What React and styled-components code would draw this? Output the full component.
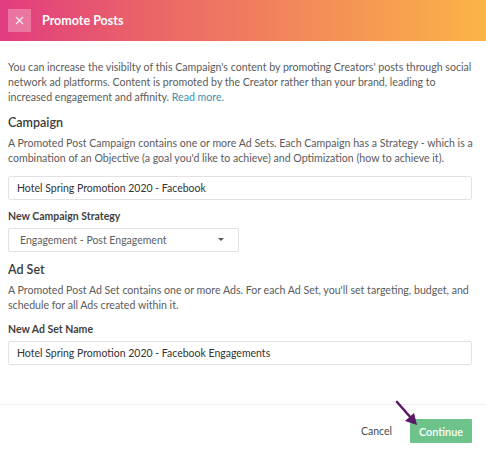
import React from 'react'
import styled, { createGlobalStyle } from 'styled-components'

const GlobalStyle = createGlobalStyle`
  html, body {
    margin: 0;
    padding: 0;
    background: #fff;
    font-family: "Lato", "Open Sans", sans-serif;
  }
`

const Modal = styled.div`
  width: 486px;
  height: 450px;
  display: flex;
  flex-direction: column;
  position: relative;
  overflow: hidden;
`

const Header = styled.div`
  height: 41px;
  display: flex;
  align-items: center;
  padding: 0 8px;
  gap: 11px;
  background: linear-gradient(90deg, #e13c80 0%, #ea6468 30%, #f2875a 60%, #fbb446 100%);
`

const CloseButton = styled.button`
  width: 23px;
  height: 23px;
  border: none;
  padding: 0;
  background: rgba(255, 255, 255, 0.28);
  display: flex;
  align-items: center;
  justify-content: center;
  cursor: pointer;
`

const Title = styled.h1`
  margin: 0;
  font-size: 12.5px;
  font-weight: 700;
  color: #fff;
`

const Body = styled.div`
  flex: 1;
  padding: 19px 14px 0 8px;
`

const Text = styled.p`
  margin: 0 0 ${p => p.$mb || 0}px;
  font-size: 10.6px;
  line-height: 14.8px;
  color: #5b5b5b;
  white-space: nowrap;
`

const Link = styled.a`
  color: #3d8fb0;
  text-decoration: none;
`

const Heading = styled.h2`
  margin: 0 0 6px;
  font-size: 12.5px;
  font-weight: 600;
  color: #3a3a3a;
`

const Label = styled.div`
  font-size: 10.5px;
  font-weight: 700;
  color: #3f3f3f;
  margin-bottom: 6px;
`

const Input = styled.div`
  box-sizing: border-box;
  width: ${p => p.$width || '464px'};
  height: 24px;
  border: 1px solid #e2e2e2;
  border-radius: 2px;
  display: flex;
  align-items: center;
  padding: 0 ${p => p.$pad || 8}px;
  font-size: 10.5px;
  color: ${p => p.$muted ? '#5e5e5e' : '#333'};
  margin-bottom: ${p => p.$mb || 0}px;
  justify-content: space-between;
`

const Caret = styled.span`
  width: 0;
  height: 0;
  border-left: 3px solid transparent;
  border-right: 3px solid transparent;
  border-top: 3px solid #555;
  margin-right: 3px;
`

const Footer = styled.div`
  box-sizing: border-box;
  height: 46px;
  border-top: 1px solid #f0f0f0;
  display: flex;
  align-items: center;
  justify-content: flex-end;
  gap: 18px;
  padding: 7px 14px 0 0;
  margin-top: auto;
`

const Cancel = styled.button`
  border: none;
  background: none;
  font-family: inherit;
  font-size: 10.5px;
  color: #4a4a4a;
  padding: 0;
`

const Continue = styled.button`
  border: none;
  width: 62px;
  height: 24px;
  background: #6ec38b;
  color: #fff;
  font-family: inherit;
  font-size: 10.8px;
  font-weight: 600;
  border-radius: 1px;
`

const Arrow = styled.svg`
  position: absolute;
  left: 394px;
  top: 400px;
`

export default function App() {
  return (
    <>
      <GlobalStyle />
      <Modal>
        <Header>
          <CloseButton>
            <svg width="9" height="9" viewBox="0 0 9 9">
              <path d="M1 1 L8 8 M8 1 L1 8" stroke="#fff" strokeOpacity="0.85" strokeWidth="1.3" />
            </svg>
          </CloseButton>
          <Title>Promote Posts</Title>
        </Header>
        <Body>
          <Text $mb={11}>
            You can increase the visibilty of this Campaign's content by promoting Creators' posts through social<br />
            network ad platforms. Content is promoted by the Creator rather than your brand, leading to<br />
            increased engagement and affinity. <Link href="#">Read more.</Link>
          </Text>
          <Heading>Campaign</Heading>
          <Text $mb={10}>
            A Promoted Post Campaign contains one or more Ad Sets. Each Campaign has a Strategy - which is a<br />
            combination of an Objective (a goal you'd like to achieve) and Optimization (how to achieve it).
          </Text>
          <Input $mb={10}>Hotel Spring Promotion 2020 - Facebook</Input>
          <Label>New Campaign Strategy</Label>
          <Input $width="231px" $pad={11} $muted $mb={10}>
            Engagement - Post Engagement
            <Caret />
          </Input>
          <Heading>Ad Set</Heading>
          <Text $mb={10}>
            A Promoted Post Ad Set contains one or more Ads. For each Ad Set, you'll set targeting, budget, and<br />
            schedule for all Ads created within it.
          </Text>
          <Label>New Ad Set Name</Label>
          <Input>Hotel Spring Promotion 2020 - Facebook Engagements</Input>
        </Body>
        <Footer>
          <Cancel>Cancel</Cancel>
          <Continue>Continue</Continue>
        </Footer>
        <Arrow width="28" height="28" viewBox="0 0 28 28">
          <path d="M3 2 L18 19" stroke="#5a1a66" strokeWidth="2.6" strokeLinecap="round" />
          <path d="M23 25 L11 21 L20 13 Z" fill="#5a1a66" />
        </Arrow>
      </Modal>
    </>
  )
}
